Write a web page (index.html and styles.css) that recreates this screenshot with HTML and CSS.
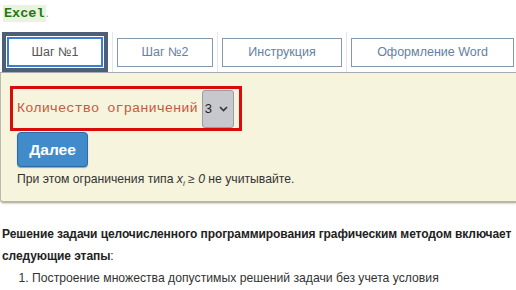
FILE: index.html
```
<!DOCTYPE html>
<html lang="ru">
    <head>
        <meta charset="utf-8">
        <link rel="stylesheet" href="styles.css">
    </head>
    <body>
        <p class="intro"><code>Excel</code>.</p>
        <ul class="tabs">
            <li><a class="tab active">Шаг №1</a></li>
            <li><a class="tab tab-2">Шаг №2</a></li>
            <li><a class="tab tab-3">Инструкция</a></li>
            <li><a class="tab tab-4">Оформление Word</a></li>
        </ul>
        <section class="panel">
            <div class="limits">
                <label for="count">Количество ограничений</label>
                <span class="select-wrap">
                    <select id="count">
                        <option>1</option>
                        <option>2</option>
                        <option selected>3</option>
                        <option>4</option>
                    </select>
                    <svg class="chevron" width="9" height="6" viewBox="0 0 9 6"><path d="M1 1l3.5 3.5L8 1" fill="none" stroke="#333" stroke-width="1.6"/></svg>
                </span>
            </div>
            <button class="btn">Далее</button>
            <p class="note">При этом ограничения типа <i>x<sub>i</sub></i> &ge; <i>0</i> не учитывайте.</p>
        </section>
        <p class="lead"><b>Решение задачи целочисленного программирования графическим методом включает</b> <b>следующие этапы</b>:</p>
        <ol class="steps">
            <li>Построение множества допустимых решений задачи без учета условия</li>
        </ol>
    </body>
</html>
```
FILE: styles.css
```
body{
    margin:0;
    font-family:"Liberation Sans", Arial, sans-serif;
    font-size:12px;
    color:#333;
    background:#fff;
    width:516px;
    overflow:hidden;
}
.intro{
    margin:0;
    padding:4px 0 0 3px;
    height:28px;
    line-height:18px;
    color:#999;
}
.intro code{
    font-family:"Liberation Mono", monospace;
    font-weight:bold;
    font-size:13.5px;
    color:#23780f;
    background:#eaf2e0;
    padding:1px 1px;
}
.tabs{
    display:flex;
    margin:0;
    padding:0;
    height:40px;
    border-bottom:1px solid #a4a9ad;
}
.tabs li{
    list-style:none;
    display:flex;
    align-items:center;
    padding:0 4px;
    border-right:1px solid #e6e6e6;
}
.tabs li:first-child{
    padding-left:2px;
}
.tabs li:last-child{
    border-right:none;
}
.tab{
    display:flex;
    align-items:center;
    justify-content:center;
    box-sizing:border-box;
    height:29px;
    border:1px solid #8598ad;
    color:#6581a0;
    font-size:12.5px;
    cursor:pointer;
}
.tab.active{
    width:106px;
    height:40px;
    border:4px solid #4c5f77;
    box-shadow:inset 0 0 0 1px #fff, inset 0 0 0 3px #3a7fd4;
    color:#555;
}
.tab-2{ width:96px; }
.tab-3{ width:120px; }
.tab-4{ width:163px; }
.panel{
    background:#f6f4dc;
    border-left:1px solid #b9b9b0;
    border-bottom:2px solid #b8b8a6;
    border-bottom-left-radius:4px;
    box-shadow:0 1px 2px #d8d8cc;
    padding:13px 0 0 9px;
    height:115px;
}
.limits{
    display:flex;
    align-items:center;
    width:222px;
    height:39px;
    border:3px solid #d90b0b;
    padding-left:4px;
}
.limits label{
    font-family:"Liberation Mono", monospace;
    font-size:13.7px;
    color:#c8573f;
    margin-right:4px;
}
.select-wrap{
    position:relative;
    display:flex;
}
.select-wrap select{
    appearance:none;
    -webkit-appearance:none;
    width:32px;
    height:38px;
    margin:0;
    padding:0 0 0 2px;
    border:1px solid #9c9ca4;
    border-radius:3px;
    background:#c7c7ce;
    font-family:"Liberation Sans", Arial, sans-serif;
    font-size:13px;
    color:#222;
}
.chevron{
    position:absolute;
    right:6px;
    top:16px;
}
.btn{
    display:block;
    margin:1px 0 0 7px;
    width:71px;
    height:35px;
    border:1px solid #2d6aa6;
    border-radius:4px;
    background:#418bca;
    color:#fff;
    font-family:"Liberation Sans", Arial, sans-serif;
    font-weight:bold;
    font-size:15.5px;
    box-shadow:0 1px 1px #8aa;
    cursor:pointer;
}
.note{
    margin:5px 0 0 7px;
    font-size:12.2px;
    color:#333;
}
.note sub{
    font-size:8px;
}
.lead{
    margin:20px 0 0 2px;
    line-height:22px;
    font-size:12px;
    letter-spacing:-0.08px;
    color:#222;
}
.steps{
    margin:0;
    padding-left:32px;
    line-height:23px;
    font-size:12.2px;
    color:#333;
}
```
